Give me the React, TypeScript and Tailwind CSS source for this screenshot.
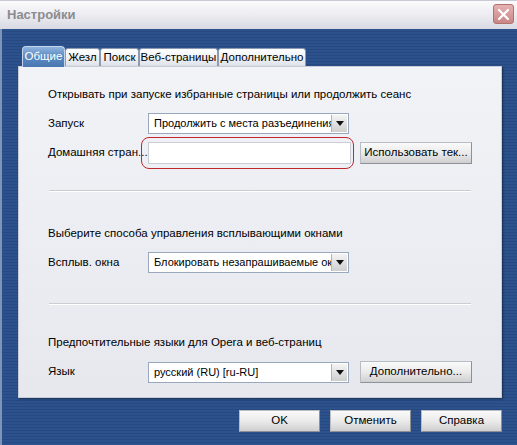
import React from "react";

const font = { fontFamily: '"Liberation Sans", "DejaVu Sans", sans-serif' };

function Select({ text }: { text: string }) {
  return (
    <div className="relative w-[201px] h-[21px] bg-white border border-[#9aa8bd] flex items-center overflow-hidden">
      <span className="pl-[5px] whitespace-nowrap text-[11px] text-black">{text}</span>
      <div className="absolute right-[1px] top-[1px] bottom-[1px] w-[16px] bg-gradient-to-b from-[#f4f4f4] to-[#cfcfcf] border-l border-[#b4b4b4] flex items-center justify-center">
        <svg width="8" height="5" viewBox="0 0 8 5">
          <path d="M0 0 L8 0 L4 5 Z" fill="#111" />
        </svg>
      </div>
    </div>
  );
}

function Btn({ text, w }: { text: string; w: string }) {
  return (
    <div
      className={`${w} h-[22px] flex items-center justify-center whitespace-nowrap text-[11.5px] text-black bg-gradient-to-b from-[#fafafa] via-[#ebebeb] to-[#cfcfcf] border border-[#b9bcc2] border-b-[#8d9096] border-r-[#8d9096]`}
    >
      {text}
    </div>
  );
}

function Sep() {
  return <div className="mx-[30px] h-[2px] border-t border-[#c9ccd3] border-b border-b-white" />;
}

const tabCls =
  "h-[18px] rounded-t-[3px] bg-gradient-to-b from-[#ffffff] to-[#dfe3ea] border border-[#8c9ab4] border-b-0 flex items-center justify-center text-black whitespace-nowrap";

export default function App() {
  return (
    <div className="w-[517px] h-[445px] flex flex-col overflow-hidden" style={font}>
      {/* title bar */}
      <div className="h-[29px] flex items-center justify-between bg-gradient-to-b from-[#fbfbfd] via-[#ececf1] to-[#d8d9e2] border-t border-[#c8cad4] pl-[7px] pr-[3px]">
        <span className="text-[13px] font-bold text-[#8b8b8f]">Настройки</span>
        <div className="w-[21px] h-[20px] rounded-[3px] bg-gradient-to-b from-[#e6b2b2] to-[#c98686] border border-[#b27272] flex items-center justify-center mb-[2px]">
          <svg width="13" height="13" viewBox="0 0 13 13">
            <path d="M2 2 L11 11 M11 2 L2 11" stroke="#fff" strokeWidth="2.2" strokeLinecap="round" />
          </svg>
        </div>
      </div>
      {/* body */}
      <div className="flex-1 flex flex-col pl-[16px] pr-[15px] border-l-2 border-l-[#7d93bb] bg-[repeating-linear-gradient(180deg,#2c528d_0px,#2c528d_2px,#28497f_2px,#28497f_3px)]">
        {/* tabs */}
        <div className="mt-[17px] ml-[4px] flex items-end h-[20px] text-[11.5px]">
          <div className="w-[43px] h-[21px] rounded-t-[4px] bg-gradient-to-b from-[#8fb4de] via-[#5a88c0] to-[#4a78b2] border border-[#c5d6ec] border-b-0 text-white flex items-center justify-center whitespace-nowrap relative z-10 -mb-[1px]">
            Общие
          </div>
          <div className={`w-[35px] ${tabCls}`}>Жезл</div>
          <div className={`w-[39px] ${tabCls}`}>Поиск</div>
          <div className={`w-[79px] ${tabCls}`}>Веб-страницы</div>
          <div className={`w-[88px] ${tabCls}`}>Дополнительно</div>
        </div>
        {/* panel */}
        <div className="w-[484px] h-[332px] bg-gradient-to-b from-[#f2f3f7] to-[#e6e8ee] border border-[#c8ccd6] shadow-[1px_1px_2px_rgba(0,0,0,0.45)] flex flex-col text-[11.5px] text-black">
          <div className="mt-[21px] pl-[29px] h-[14px] flex items-center whitespace-nowrap">
            Открывать при запуске избранные страницы или продолжить сеанс
          </div>
          <div className="mt-[11px] pl-[29px] flex items-center">
            <span className="w-[100px]">Запуск</span>
            <Select text="Продолжить с места разъединения" />
          </div>
          <div className="mt-[8px] pl-[29px] flex items-center">
            <span className="w-[100px] whitespace-nowrap">Домашняя стран...</span>
            <div className="relative">
              <div className="w-[203px] h-[22px] bg-white border border-[#c9ccd2]" />
              <div className="absolute -left-[7px] -top-[5px] -right-[3px] -bottom-[5px] rounded-[8px] border border-[#c2272f]" />
            </div>
            <div className="ml-[9px]">
              <Btn text="Использовать тек..." w="w-[112px]" />
            </div>
          </div>
          <div className="mt-[26px]">
            <Sep />
          </div>
          <div className="mt-[35px] pl-[29px] h-[14px] flex items-center whitespace-nowrap">
            Выберите способа управления всплывающими окнами
          </div>
          <div className="mt-[11px] pl-[29px] flex items-center">
            <span className="w-[100px]">Всплыв. окна</span>
            <Select text="Блокировать незапрашиваемые окна" />
          </div>
          <div className="mt-[30px]">
            <Sep />
          </div>
          <div className="mt-[31px] pl-[29px] h-[14px] flex items-center whitespace-nowrap">
            Предпочтительные языки для Opera и веб-страниц
          </div>
          <div className="mt-[11px] pl-[29px] flex items-center">
            <span className="w-[100px]">Язык</span>
            <Select text="русский (RU) [ru-RU]" />
            <div className="ml-[11px]">
              <Btn text="Дополнительно..." w="w-[112px]" />
            </div>
          </div>
        </div>
        {/* bottom buttons */}
        <div className="mt-[12px] flex justify-end gap-[10px]">
          <Btn text="OK" w="w-[81px]" />
          <Btn text="Отменить" w="w-[81px]" />
          <Btn text="Справка" w="w-[81px]" />
        </div>
      </div>
    </div>
  );
}
